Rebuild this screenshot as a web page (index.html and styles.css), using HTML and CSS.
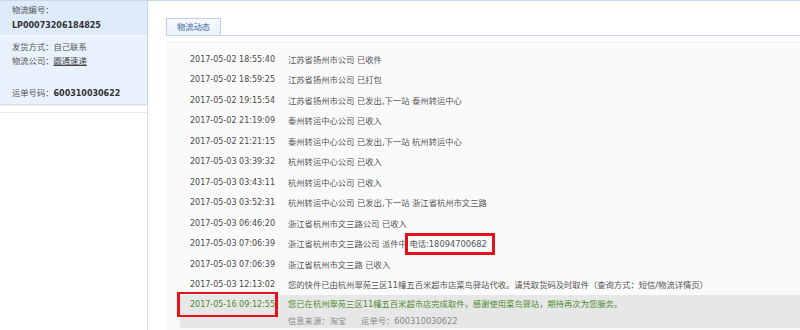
FILE: index.html
```html
<!DOCTYPE html>
<html lang="zh-CN">
<head>
    <meta charset="UTF-8">
    <title>物流详情</title>
    <link rel="stylesheet" href="styles.css">
</head>
<body>
    <div class="page">
        <aside class="side">
            <div class="side-card">
                <div class="card-head">
                    <div class="lbl">物流编号：</div>
                    <div class="num">LP00073206184825</div>
                </div>
                <div class="card-body">
                    <p>发货方式：自己联系</p>
                    <p>物流公司：<a href="#">圆通速递</a></p>
                    <p class="waybill">运单号码：<b>600310030622</b></p>
                </div>
            </div>
            <div class="side-rule"></div>
        </aside>

        <main class="main">
            <div class="tabs">
                <span class="tab">物流动态</span>
            </div>
            <div class="trace">
                <ul class="trace-list">
                    <li><span class="time">2017-05-02 18:55:40</span><span class="desc">江苏省扬州市公司 已收件</span></li>
                    <li><span class="time">2017-05-02 18:59:25</span><span class="desc">江苏省扬州市公司 已打包</span></li>
                    <li><span class="time">2017-05-02 19:15:54</span><span class="desc">江苏省扬州市公司 已发出,下一站 泰州转运中心</span></li>
                    <li><span class="time">2017-05-02 21:19:09</span><span class="desc">泰州转运中心公司 已收入</span></li>
                    <li><span class="time">2017-05-02 21:21:15</span><span class="desc">泰州转运中心公司 已发出,下一站 杭州转运中心</span></li>
                    <li><span class="time">2017-05-03 03:39:32</span><span class="desc">杭州转运中心公司 已收入</span></li>
                    <li><span class="time">2017-05-03 03:43:11</span><span class="desc">杭州转运中心公司 已收入</span></li>
                    <li><span class="time">2017-05-03 03:52:31</span><span class="desc">杭州转运中心公司 已发出,下一站 浙江省杭州市文三路</span></li>
                    <li><span class="time">2017-05-03 06:46:20</span><span class="desc">浙江省杭州市文三路公司 已收入</span></li>
                    <li><span class="time">2017-05-03 07:06:39</span><span class="desc">浙江省杭州市文三路公司 派件中 <span class="mark mark-phone">电话:18094700682</span></span></li>
                    <li><span class="time">2017-05-03 07:06:39</span><span class="desc">浙江省杭州市文三路 已收入</span></li>
                    <li><span class="time">2017-05-03 12:13:02</span><span class="desc">您的快件已由杭州翠苑三区11幢五百米超市店菜鸟驿站代收。请凭取货码及时取件（查询方式：短信/物流详情页）</span></li>
                    <li class="latest">
                        <div class="latest-main"><span class="time mark mark-date">2017-05-16 09:12:55</span><span class="desc">您已在杭州翠苑三区11幢五百米超市店完成取件，感谢使用菜鸟驿站，期待再次为您服务。</span></div>
                        <div class="latest-info"><span>信息来源：淘宝</span><span>运单号：600310030622</span></div>
                    </li>
                </ul>
            </div>
        </main>
    </div>
</body>
</html>
```

FILE: styles.css
```css
html, body {
    margin: 0;
    height: 100%;
}

body {
    font-family: "DejaVu Sans", "Noto Sans CJK SC", sans-serif;
    font-size: 8.3px;
    color: #555;
    background: #fff;
    overflow: hidden;
}

.page {
    display: flex;
    height: 100%;
}

/* left column */
.side {
    width: 147px;
    flex-shrink: 0;
    border-right: 1px solid #d6e1f0;
}

.side-card {
    background: #e9f2fc;
    border-top: 1px solid #cfdcee;
    box-shadow: 0 1px 2px rgba(90, 110, 140, 0.35);
}

.card-head {
    background: #deebfa;
    padding: 2px 12px 2px;
    height: 30px;
    border-bottom: 1px solid #f4f8fd;
}

.card-head .lbl {
    line-height: 15px;
    color: #555;
}

.card-head .num {
    font-size: 8px;
    font-weight: bold;
    line-height: 15px;
    color: #333;
}

.card-body {
    padding: 4px 12px 3px;
}

.card-body p {
    margin: 0;
    line-height: 14px;
    color: #555;
}

.card-body a {
    color: #444;
    text-decoration: underline;
}

.card-body .waybill {
    margin-top: 18px;
}

.card-body b {
    font-size: 8px;
    color: #333;
}

.side-rule {
    margin-top: 8px;
    height: 1px;
    background: #f1e6e6;
}

/* right column */
.main {
    flex: 1;
    display: flex;
    flex-direction: column;
    border-top: 1px solid #c9d6ea;
    padding-left: 18px;
    min-width: 0;
}

.tabs {
    padding-top: 17px;
    border-bottom: 1px solid #c6d4e9;
    display: flex;
}

.tab {
    box-sizing: border-box;
    width: 55px;
    height: 17px;
    line-height: 16px;
    text-align: center;
    color: #3a6aa3;
    background: linear-gradient(#f6f9fe, #eaf2fc);
    border: 1px solid #bfd0e7;
    border-bottom: none;
}

.trace {
    flex: 1;
    margin-top: 6px;
    background: #fafafa;
    border-top: 1px solid #efefef;
    padding-top: 7px;
    overflow: hidden;
}

.trace-list {
    list-style: none;
    margin: 0;
    padding: 0;
}

.trace-list li {
    display: flex;
    line-height: 20.45px;
    padding-left: 24px;
    white-space: nowrap;
}

.time {
    font-size: 8px;
    width: 98px;
    flex-shrink: 0;
    color: #4a4a4a;
}

.trace-list li.latest {
    display: block;
    margin-left: 14px;
    padding-left: 10px;
    background: #e7e7e7;
    color: #4a8a2c;
}

.latest .time {
    color: #4a8a2c;
}

.latest-main {
    display: flex;
    line-height: 19px;
}

.latest-info {
    padding-left: 98px;
    line-height: 14px;
    color: #888;
    display: flex;
    gap: 15px;
}

/* red annotation boxes */
.mark {
    position: relative;
}

.mark::after {
    content: "";
    position: absolute;
    border: 3px solid #e5121b;
}

.mark-phone::after {
    top: -6px;
    bottom: -6px;
    left: -4px;
    right: -8px;
}

.mark-date::after {
    top: -3px;
    bottom: -3px;
    left: -13px;
    right: 10px;
    border-width: 2px 3px;
}
```
